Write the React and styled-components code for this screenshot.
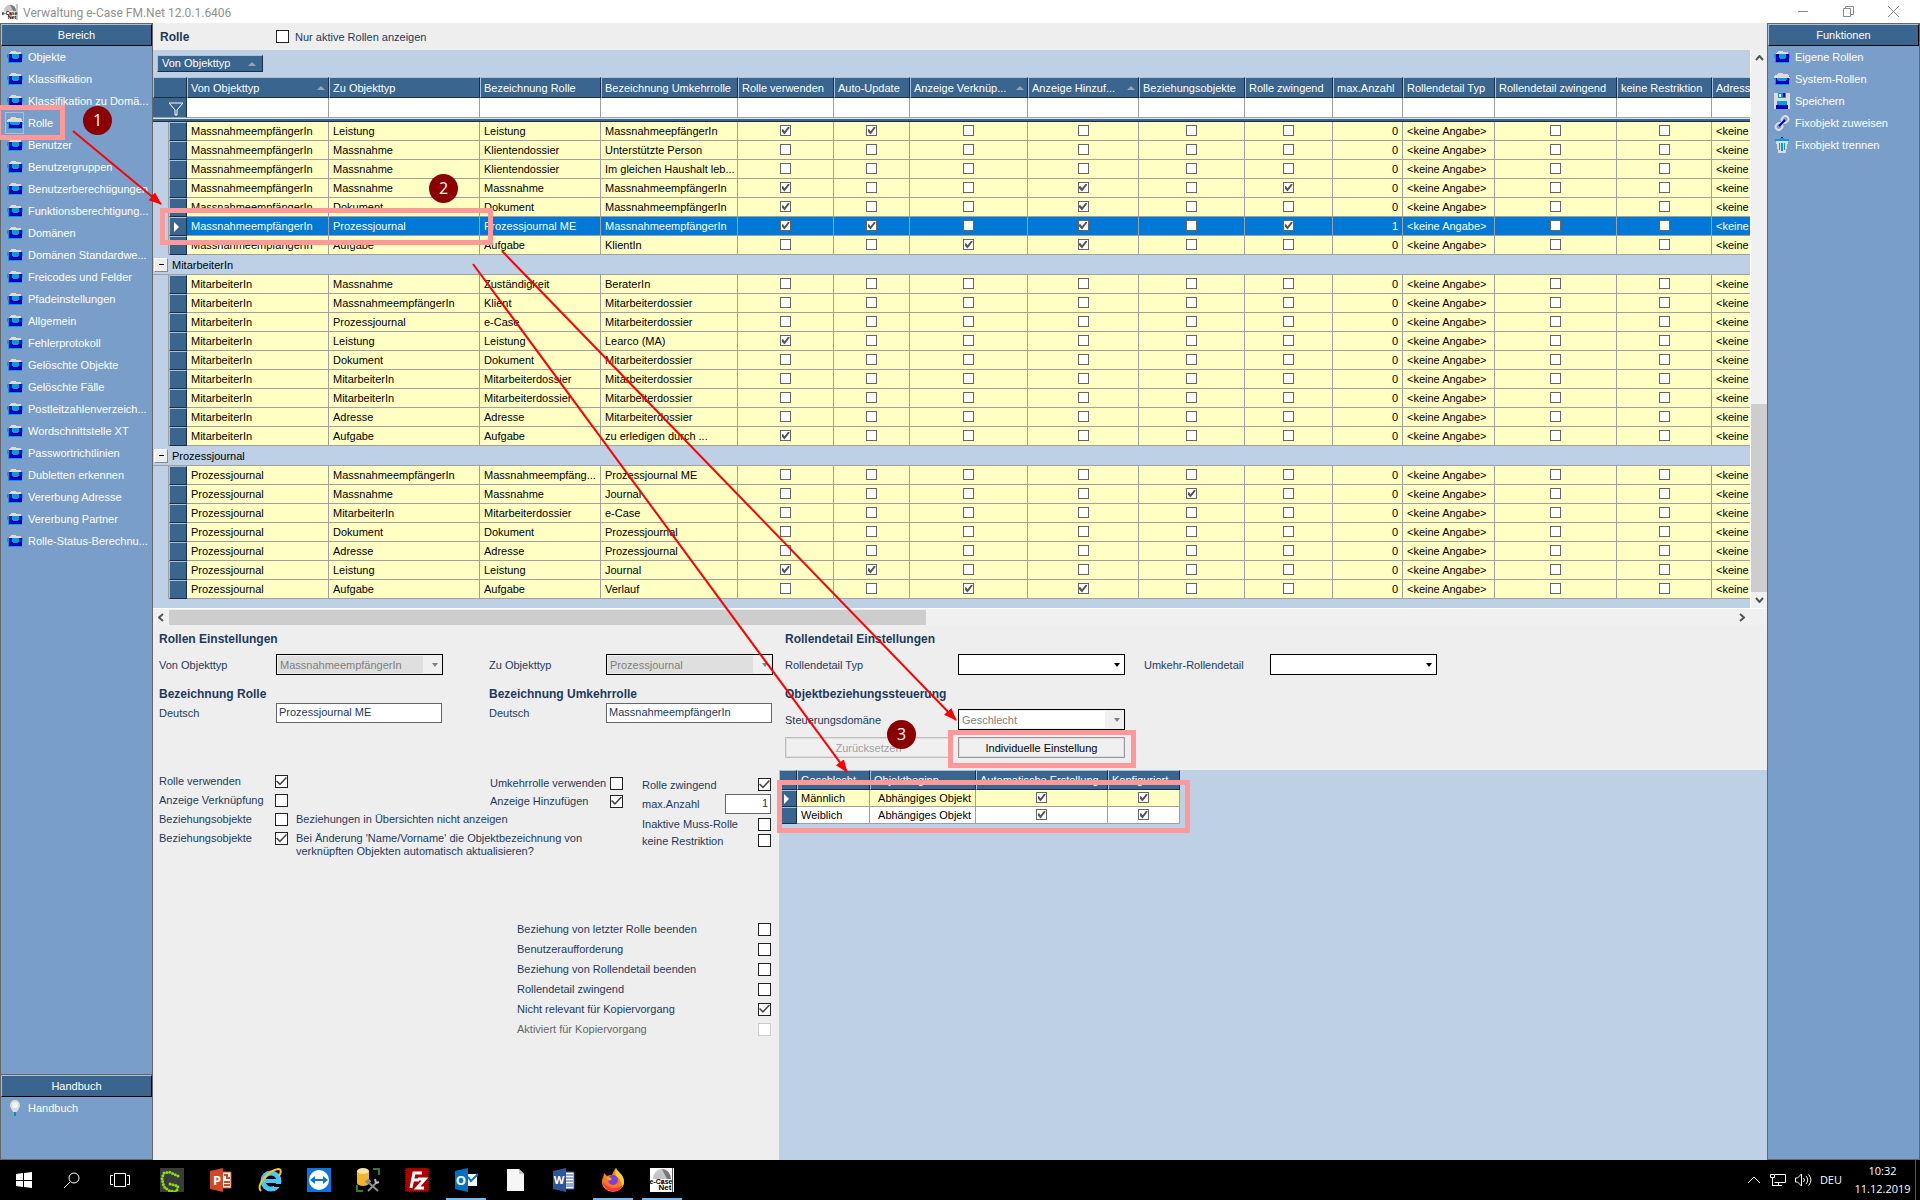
import styled, { createGlobalStyle, css } from "styled-components";

const font = `"Liberation Sans", Arial, sans-serif`;
const uiFont = `"Open Sans", "Noto Sans", sans-serif`;

const colors = {
  header: "#3a658f",
  headerDark: "#1a2f47",
  headerLight: "#a9c1da",
  side: "#799ec9",
  light: "#bdd0e6",
  panel: "#eeeeee",
  yellow: "#ffffc4",
  selected: "#0078d7",
  line: "#a0a0a0",
  navy: "#1d3a5c",
  pink: "#ff9999",
  badge: "#8b0000",
};

const areas = [
  "Objekte", "Klassifikation", "Klassifikation zu Domä...", "Rolle", "Benutzer", "Benutzergruppen",
  "Benutzerberechtigungen", "Funktionsberechtigung...", "Domänen", "Domänen Standardwe...",
  "Freicodes und Felder", "Pfadeinstellungen", "Allgemein", "Fehlerprotokoll", "Gelöschte Objekte",
  "Gelöschte Fälle", "Postleitzahlenverzeich...", "Wordschnittstelle XT", "Passwortrichtlinien",
  "Dubletten erkennen", "Vererbung Adresse", "Vererbung Partner", "Rolle-Status-Berechnu...",
];

const columns = [
  { title: "Von Objekttyp", width: 142, sort: true },
  { title: "Zu Objekttyp", width: 151 },
  { title: "Bezeichnung Rolle", width: 121 },
  { title: "Bezeichnung Umkehrrolle", width: 137 },
  { title: "Rolle verwenden", width: 96 },
  { title: "Auto-Update", width: 76 },
  { title: "Anzeige Verknüp...", width: 118, sort: true },
  { title: "Anzeige Hinzuf...", width: 111, sort: true },
  { title: "Beziehungsobjekte", width: 106 },
  { title: "Rolle zwingend", width: 88 },
  { title: "max.Anzahl", width: 70 },
  { title: "Rollendetail Typ", width: 92 },
  { title: "Rollendetail zwingend", width: 122 },
  { title: "keine Restriktion", width: 95 },
  { title: "Adresstyp", width: 140 },
];

// [zu, rolle, umkehrrolle, flags, max]
const groups = [
  {
    name: "MassnahmeempfängerIn",
    hidden: true,
    rows: [
      ["Leistung", "Leistung", "MassnahmeepfängerIn", "110000"],
      ["Massnahme", "Klientendossier", "Unterstützte Person", "000000"],
      ["Massnahme", "Klientendossier", "Im gleichen Haushalt leb...", "000000"],
      ["Massnahme", "Massnahme", "MassnahmeempfängerIn", "100101"],
      ["Dokument", "Dokument", "MassnahmeempfängerIn", "100100"],
      ["Prozessjournal", "Prozessjournal ME", "MassnahmeempfängerIn", "110101", 1],
      ["Aufgabe", "Aufgabe", "KlientIn", "001100"],
    ],
  },
  {
    name: "MitarbeiterIn",
    rows: [
      ["Massnahme", "Zuständigkeit", "BeraterIn", "000000"],
      ["MassnahmeempfängerIn", "Klient", "Mitarbeiterdossier", "000000"],
      ["Prozessjournal", "e-Case", "Mitarbeiterdossier", "000000"],
      ["Leistung", "Leistung", "Learco (MA)", "100000"],
      ["Dokument", "Dokument", "Mitarbeiterdossier", "000000"],
      ["MitarbeiterIn", "Mitarbeiterdossier", "Mitarbeiterdossier", "000000"],
      ["MitarbeiterIn", "Mitarbeiterdossier", "Mitarbeiterdossier", "000000"],
      ["Adresse", "Adresse", "Mitarbeiterdossier", "000000"],
      ["Aufgabe", "Aufgabe", "zu erledigen durch ...", "100000"],
    ],
  },
  {
    name: "Prozessjournal",
    rows: [
      ["MassnahmeempfängerIn", "Massnahmeempfäng...", "Prozessjournal ME", "000000"],
      ["Massnahme", "Massnahme", "Journal", "000010"],
      ["MitarbeiterIn", "Mitarbeiterdossier", "e-Case", "000000"],
      ["Dokument", "Dokument", "Prozessjournal", "000000"],
      ["Adresse", "Adresse", "Prozessjournal", "000000"],
      ["Leistung", "Leistung", "Journal", "110000"],
      ["Aufgabe", "Aufgabe", "Verlauf", "001100"],
    ],
  },
];

const lowerChecks = [
  { label: "Beziehung von letzter Rolle beenden" },
  { label: "Benutzeraufforderung" },
  { label: "Beziehung von Rollendetail beenden" },
  { label: "Rollendetail zwingend" },
  { label: "Nicht relevant für Kopiervorgang", checked: true },
  { label: "Aktiviert für Kopiervorgang", disabled: true },
];

function FolderIcon({ open }) {
  return (
    <svg width="16" height="16" viewBox="0 0 16 16" shapeRendering="crispEdges">
      <path d="M1 5h15v4h-1v5H1V9H0V5z" fill="#0a9bd6" />
      <path d="M2 5h13v8H2z" fill="#0000c0" />
      <path d="M2 4l2-2h5v1h5v2H2z" fill="#dcdcdc" />
      {open ? (
        <>
          <path d="M1 4h14v2h1v1H0V5h1z" fill="#dcdcdc" />
          <path d="M3 7h10v2h-1v1H4V9H3z" fill="#0a9bd6" />
        </>
      ) : (
        <path d="M5 5h7v4h-1v1H6V9H5z" fill="#0a9bd6" />
      )}
    </svg>
  );
}

function DiskIcon() {
  return (
    <svg width="16" height="16" viewBox="0 0 16 16" shapeRendering="crispEdges">
      <path d="M0 0h16v16H0z" fill="#dcdcdc" />
      <path d="M4 0h8v5H4z" fill="#0a9bd6" />
      <path d="M5 1h2v3H5z" fill="#fff" />
      <path d="M9 0h2v4H9z" fill="#0000c0" />
      <path d="M3 8h10v5H3z" fill="#0a9bd6" />
      <path d="M2 12h12v4H2z" fill="#0000c0" />
    </svg>
  );
}

function LinkIcon() {
  return (
    <svg width="16" height="16" viewBox="0 0 16 16" fill="none">
      <rect x="8" y="1" width="6" height="7" rx="3" transform="rotate(45 11 4.5)" stroke="#dcdcdc" strokeWidth="2" />
      <rect x="2" y="8" width="6" height="7" rx="3" transform="rotate(45 5 11.5)" stroke="#dcdcdc" strokeWidth="2" />
      <path d="M5 11l6-6" stroke="#0000c0" strokeWidth="2" />
    </svg>
  );
}

function TrashIcon() {
  return (
    <svg width="16" height="16" viewBox="0 0 16 16" shapeRendering="crispEdges">
      <path d="M2 4h12v3h-1v5h-1v4H4v-4H3V7H2z" fill="#dcdcdc" />
      <path d="M1 2h5V1h4v1h5v2H1z" fill="#0a9bd6" />
      <path d="M7 0h2v1H7z" fill="#0000c0" />
      <path d="M5 6h1v7H5zM10 6h1v7h-1zM7 6h2v8H7z" fill="#0a9bd6" />
    </svg>
  );
}

function BulbIcon() {
  return (
    <svg width="16" height="16" viewBox="0 0 16 16">
      <path d="M8 0a5 5 0 0 1 5 5c0 3-2 4-3 7H6C5 9 3 8 3 5a5 5 0 0 1 5-5z" fill="#dcdcdc" />
      <circle cx="8" cy="5" r="3" fill="#f4f4f4" />
      <path d="M7 12h2v4H7z" fill="#0a8ac6" />
    </svg>
  );
}

function CaseLogo({ size }) {
  return (
    <svg width={size} height={size} viewBox="0 0 24 24">
      <path d="M0 0h24v24H0z" fill="#fff" />
      <path d="M3 11a9 10 0 0 1 18 0z" fill="#c4c4c4" />
      <path d="M12 1a9 10 0 0 1 9 10h-4z" fill="#777" />
      <path d="M22 0h1v24h-1z" fill="#555" />
      <text x="11" y="16" fontFamily="Liberation Sans" fontSize="7" fontWeight="700" textAnchor="middle">e-Case</text>
      <text x="15" y="22" fontFamily="Liberation Sans" fontSize="8" fontWeight="700" textAnchor="middle">Net</text>
      <path d="M11 12l3 2-2 3z" fill="#c00" />
    </svg>
  );
}

const functions = [
  { label: "Eigene Rollen", icon: <FolderIcon /> },
  { label: "System-Rollen", icon: <FolderIcon open /> },
  { label: "Speichern", icon: <DiskIcon /> },
  { label: "Fixobjekt zuweisen", icon: <LinkIcon /> },
  { label: "Fixobjekt trennen", icon: <TrashIcon /> },
];

const letter = { fontFamily: "Open Sans", fontWeight: 700, fill: "#fff", textAnchor: "middle" };

const taskApps = [
  {
    name: "Greenshot",
    icon: (
      <>
        <path d="M0 0h24v24H0z" fill="#3b3b3b" />
        <path d="M18 8l-4-2-5-2-5 1-2 5 1 6 2 4 5 3 6 1M10 16l4 1 4 1-1 4" fill="none" stroke="#84e010" strokeWidth="3" strokeDasharray="0 3" strokeLinecap="round" />
      </>
    ),
  },
  {
    name: "PowerPoint",
    icon: (
      <>
        <path d="M12 4h10v16H12z" fill="#fff" stroke="#d24726" />
        <path d="M15 7h3v3h3M15 14h6M15 17h6" stroke="#d24726" strokeWidth="2" fill="none" />
        <path d="M1 3l13-3v24L1 21z" fill="#d24726" />
        <text x="8" y="17" fontSize="13" {...letter}>P</text>
      </>
    ),
  },
  {
    name: "Internet Explorer",
    icon: (
      <>
        <circle cx="13" cy="13" r="8" fill="none" stroke="#4dc4f4" strokeWidth="5" />
        <path d="M7 13h15" stroke="#4dc4f4" strokeWidth="4" />
        <path d="M16 16h8v3h-8z" fill="#000" />
        <path d="M3 23C-2 18 9 3 20 1c4 0 3 4 1 7" fill="none" stroke="#f8c51c" strokeWidth="2" />
      </>
    ),
  },
  {
    name: "TeamViewer",
    icon: (
      <>
        <path d="M0 0h24v24H0z" fill="#0e72e0" />
        <circle cx="12" cy="12" r="10" fill="#fff" />
        <path d="M3 12l5-4v3h8V8l5 4-5 4v-3H8v3z" fill="#0e72e0" />
      </>
    ),
  },
  {
    name: "SQL Konfiguration",
    icon: (
      <>
        <path d="M1 3v12a6 3 0 0 0 12 0V3z" fill="#f3b32a" />
        <ellipse cx="7" cy="3" rx="6" ry="3" fill="#fbe3a6" />
        <path d="M17 1h6v6M1 17v6h6" fill="none" stroke="#2f7d3a" strokeWidth="2" />
        <path d="M12 23l8-8M12 14l10 9" stroke="#8d8d8d" strokeWidth="2" />
        <path d="M10 15l4-3" stroke="#8d8d8d" strokeWidth="4" />
        <path d="M19 11l1 4 3-1" stroke="#bbb" strokeWidth="2" fill="none" />
      </>
    ),
  },
  {
    name: "FileZilla",
    icon: (
      <>
        <path d="M0 0h24v24H0z" fill="#b00000" />
        <path d="M0 0h24v24H0z" fill="none" stroke="#400" strokeWidth="2" strokeDasharray="1 1" />
        <path d="M6 20L9 5h8M7 12h7M13 11h7l-8 9h7" fill="none" stroke="#fff" strokeWidth="3" />
      </>
    ),
  },
  {
    name: "Outlook",
    active: true,
    icon: (
      <>
        <path d="M12 6h11v12H12z" fill="#fff" />
        <path d="M14 9l3 4 7-7" fill="none" stroke="#0072c6" strokeWidth="2" />
        <path d="M1 3l13-3v24L1 21z" fill="#0072c6" />
        <text x="7" y="17" fontSize="13" {...letter}>O</text>
      </>
    ),
  },
  {
    name: "Dokument",
    icon: (
      <>
        <path d="M4 1h12l5 5v17H4z" fill="#f6f6f6" />
        <path d="M16 1v5h5z" fill="#c4c4c4" />
      </>
    ),
  },
  {
    name: "Word",
    icon: (
      <>
        <path d="M12 4h10v17H12z" fill="#fff" stroke="#2b579a" />
        <path d="M14 7h7M14 10h7M14 13h7M14 16h7M14 18h7" stroke="#2b579a" />
        <path d="M1 3l13-3v24L1 21z" fill="#2b579a" />
        <text x="7" y="16" fontSize="11" {...letter}>W</text>
      </>
    ),
  },
  {
    name: "Firefox",
    active: true,
    icon: (
      <>
        <path d="M15 0c1 4 8 6 8 14a11 10 0 0 1-22 0c0-4 2-6 2-9l3 3c2-1 3-1 5-1 1-3 2-5 4-7z" fill="#ff7a1a" />
        <path d="M15 0c1 4 8 6 8 14 0 2-1 4-2 5 0-5-3-9-6-11-1-2-1-5 0-8z" fill="#ffcf2e" />
        <path d="M2 13c0 6 5 11 11 10 4 0 8-3 9-6-5 5-17 4-20-4z" fill="#ff3055" />
        <circle cx="12" cy="12" r="5" fill="#7a3fe0" />
        <path d="M5 9c3 0 4 0 6 2l-3 2z" fill="#ffa51f" />
      </>
    ),
  },
  { name: "e-Case", active: true, icon: <CaseLogo size={24} /> },
];

function Check({ checked, ...props }) {
  return <CheckInput type="checkbox" defaultChecked={checked} {...props} />;
}

function SideGroup({ title, children }) {
  return (
    <section>
      <SideHeader>{title}</SideHeader>
      <SideList>{children}</SideList>
    </section>
  );
}

function DropDown({ label, value = "", disabled, fill }) {
  return (
    <SelectBox $disabled={disabled}>
      <Select aria-label={label} disabled={disabled} $fill={fill} defaultValue={value}>
        <option value={value}>{value}</option>
      </Select>
      <Arrow />
    </SelectBox>
  );
}

function RoleRow({ type, row }) {
  const [to, role, reverse, flags, max = 0] = row;
  const selected = max === 1;
  return (
    <Row $selected={selected}>
      <Gutter />
      <Selector>{selected && <Pointer />}</Selector>
      <Cell>{type}</Cell>
      <Cell>{to}</Cell>
      <Cell>{role}</Cell>
      <Cell>{reverse}</Cell>
      {flags.split("").map((flag, i) => (
        <Cell key={i} $align="center">
          <Check aria-label={columns[i + 4].title} checked={flag === "1"} $small />
        </Cell>
      ))}
      <Cell $align="right">{max}</Cell>
      <Cell>&lt;keine Angabe&gt;</Cell>
      <Cell $align="center"><Check aria-label="Rollendetail zwingend" $small /></Cell>
      <Cell $align="center"><Check aria-label="keine Restriktion" $small /></Cell>
      <Cell>&lt;keine Angabe&gt;</Cell>
    </Row>
  );
}

function RoleGrid() {
  return (
    <Grid>
      <colgroup>
        <col style={{ width: 16 }} />
        <col style={{ width: 18 }} />
        {columns.map((c) => <col key={c.title} style={{ width: c.width }} />)}
      </colgroup>
      <thead>
        <tr>
          <Head colSpan={2} />
          {columns.map((c) => (
            <Head key={c.title}>
              <HeadLabel>{c.title}{c.sort && <SortMark />}</HeadLabel>
            </Head>
          ))}
        </tr>
        <tr>
          <FilterHead colSpan={2}>
            <svg width="16" height="14" viewBox="0 0 16 14">
              <path d="M1 1h14L9 8v5H7V8z" fill="none" stroke="#fff" />
            </svg>
          </FilterHead>
          {columns.map((c) => <FilterCell key={c.title} />)}
        </tr>
        <tr><Divider colSpan={17} /></tr>
      </thead>
      <tbody>
        {groups.map((g) => [
          !g.hidden && (
            <tr key={g.name}>
              <GroupCell colSpan={17}>
                <GroupLabel><Collapse aria-label={`${g.name} zuklappen`} />{g.name}</GroupLabel>
              </GroupCell>
            </tr>
          ),
          ...g.rows.map((row, i) => <RoleRow key={g.name + i} type={g.name} row={row} />),
        ])}
      </tbody>
    </Grid>
  );
}

function RoleForm() {
  return (
    <LeftForm>
      <TwoColumns>
        <div>
          <Heading>Rollen Einstellungen</Heading>
          <Field><span>Von Objekttyp</span><DropDown label="Von Objekttyp" value="MassnahmeempfängerIn" disabled fill /></Field>
          <Heading $second>Bezeichnung Rolle</Heading>
          <TextField><span>Deutsch</span><TextInput defaultValue="Prozessjournal ME" /></TextField>
        </div>
        <div>
          <Heading />
          <Field><span>Zu Objekttyp</span><DropDown label="Zu Objekttyp" value="Prozessjournal" disabled fill /></Field>
          <Heading $second>Bezeichnung Umkehrrolle</Heading>
          <TextField><span>Deutsch</span><TextInput defaultValue="MassnahmeempfängerIn" /></TextField>
        </div>
      </TwoColumns>
      <CheckColumns>
        <div>
          <LeadCheck><span>Rolle verwenden</span><Check checked /></LeadCheck>
          <LeadCheck><span>Anzeige Verknüpfung</span><Check /></LeadCheck>
          <LeadCheck><span>Beziehungsobjekte</span><Check /><Hint>Beziehungen in Übersichten nicht anzeigen</Hint></LeadCheck>
          <LeadCheck $tall>
            <span>Beziehungsobjekte</span>
            <Check checked />
            <Hint>Bei Änderung 'Name/Vorname' die Objektbezeichnung von verknüpften Objekten automatisch aktualisieren?</Hint>
          </LeadCheck>
        </div>
        <MiddleChecks>
          <CheckLine $height={18}>Umkehrrolle verwenden<Check /></CheckLine>
          <CheckLine $height={18}>Anzeige Hinzufügen<Check checked /></CheckLine>
        </MiddleChecks>
        <EndChecks>
          <CheckLine $height={19}>Rolle zwingend<Check checked /></CheckLine>
          <CheckLine $height={20}>max.Anzahl<NumberInput defaultValue="1" /></CheckLine>
          <CheckLine $height={20}>Inaktive Muss-Rolle<Check /></CheckLine>
          <CheckLine $height={13}>keine Restriktion<Check /></CheckLine>
        </EndChecks>
      </CheckColumns>
      <LowerChecks>
        {lowerChecks.map((c) => (
          <CheckLine key={c.label} $height={20} $disabled={c.disabled}>
            {c.label}
            <Check checked={c.checked} disabled={c.disabled} />
          </CheckLine>
        ))}
      </LowerChecks>
    </LeftForm>
  );
}

function DetailForm() {
  return (
    <DetailPanel>
      <Heading>Rollendetail Einstellungen</Heading>
      <DetailRow>
        <DetailLabel>Rollendetail Typ</DetailLabel>
        <DropDown label="Rollendetail Typ" />
        <ReverseLabel>Umkehr-Rollendetail</ReverseLabel>
        <DropDown label="Umkehr-Rollendetail" />
      </DetailRow>
      <Heading $second>Objektbeziehungssteuerung</Heading>
      <DetailRow $spaced>
        <DetailLabel>Steuerungsdomäne</DetailLabel>
        <DropDown label="Steuerungsdomäne" value="Geschlecht" disabled />
      </DetailRow>
      <Buttons>
        <Button disabled>Zurücksetzen</Button>
        <Button>Individuelle Einstellung</Button>
      </Buttons>
    </DetailPanel>
  );
}

function GenderGrid() {
  return (
    <SmallGrid>
      <colgroup>
        {[18, 73, 106, 132, 72].map((w, i) => <col key={i} style={{ width: w }} />)}
      </colgroup>
      <thead>
        <tr>
          {["", "Geschlecht", "Objektbeginn", "Automatische Erstellung", "Konfiguriert"].map((t) => <Head key={t} $small>{t}</Head>)}
        </tr>
      </thead>
      <tbody>
        {["Männlich", "Weiblich"].map((t, i) => (
          <SmallRow key={t} $white={i === 1}>
            <Selector>{i === 0 && <Pointer />}</Selector>
            <Cell>{t}</Cell>
            <Cell $align="right">Abhängiges Objekt</Cell>
            <Cell $align="center"><Check aria-label="Automatische Erstellung" checked $small /></Cell>
            <Cell $align="center"><Check aria-label="Konfiguriert" checked $small /></Cell>
          </SmallRow>
        ))}
      </tbody>
    </SmallGrid>
  );
}

function Taskbar() {
  return (
    <TaskbarBox>
      <TaskButton aria-label="Start">
        <svg width="16" height="16" viewBox="0 0 16 16" fill="#fff">
          <path d="M0 2l7-1v7H0zM8 1l8-1v8H8zM0 9h7v6l-7-1zM8 9h8v7l-8-1z" />
        </svg>
      </TaskButton>
      <TaskButton aria-label="Suchen">
        <svg width="18" height="18" viewBox="0 0 18 18" fill="none" stroke="#fff">
          <circle cx="11" cy="7" r="5" />
          <path d="M7 11l-6 6" />
        </svg>
      </TaskButton>
      <TaskButton aria-label="Taskansicht">
        <svg width="20" height="14" viewBox="0 0 20 14" fill="none" stroke="#fff">
          <path d="M4.500.5h11v13h-11zM3 2.500H.5v9H3M17 2.500h2.500v9H17" />
        </svg>
      </TaskButton>
      <Apps>
        {taskApps.map((app) => (
          <AppButton key={app.name} aria-label={app.name} $active={app.active}>
            <svg width="24" height="24" viewBox="0 0 24 24">{app.icon}</svg>
          </AppButton>
        ))}
      </Apps>
      <Tray>
        <svg width="14" height="8" viewBox="0 0 14 8" fill="none" stroke="#fff">
          <path d="M1 7l6-6 6 6" />
        </svg>
        <svg width="18" height="14" viewBox="0 0 18 14" fill="none" stroke="#fff">
          <path d="M5.500 1.500h11v8h-11M1.500 1.500h4v3h-4zM3.500 4.500v8M3 12.500h10M9.500 9.500v3" />
        </svg>
        <svg width="17" height="14" viewBox="0 0 17 14" fill="none" stroke="#fff">
          <path d="M.5 5h2L6.500 1v12l-4-4h-2zM8.500 5q2 2 0 4M11 3q3.500 4 0 8M13.500 1.500q5 5.500 0 11" />
        </svg>
        <span>DEU</span>
        <Clock><span>10:32</span><span>11.12.2019</span></Clock>
      </Tray>
    </TaskbarBox>
  );
}

// red callouts drawn over the window
function Callouts() {
  return (
    <>
      <Frame $x={-4} $y={105} $w={69} $h={35} />
      <Frame $x={160} $y={208} $w={333} $h={37} />
      <Frame $x={948} $y={730} $w={188} $h={38} />
      <Frame $x={777} $y={780} $w={413} $h={53} />
      <Arrows width="1000" height="800" viewBox="0 0 1000 800">
        <defs>
          <marker id="tip" markerUnits="userSpaceOnUse" markerWidth="14" markerHeight="12" refX="12" refY="5" orient="auto">
            <path d="M0 0l13 5-13 5z" fill="#f00" />
          </marker>
        </defs>
        <path d="M73 131L161 204" markerEnd="url(#tip)" />
        <path d="M473 264L847 772" markerEnd="url(#tip)" />
        <path d="M502 251L956 720" markerEnd="url(#tip)" />
      </Arrows>
      <Badge $x={83} $y={106}>1</Badge>
      <Badge $x={429} $y={174}>2</Badge>
      <Badge $x={887} $y={720}>3</Badge>
    </>
  );
}

function App() {
  return (
    <Window>
      <GlobalStyle />
      <TitleBar>
        <CaseLogo size={16} />
        <Title>Verwaltung e-Case FM.Net 12.0.1.6406</Title>
        <WindowButton aria-label="Minimieren"><svg width="11" height="11"><path d="M0 5.500h10" stroke="#888" /></svg></WindowButton>
        <WindowButton aria-label="Wiederherstellen"><svg width="11" height="11"><path d="M.5 2.500h7v8h-7zM2.500 2.500v-2h8v8h-3" stroke="#888" fill="none" /></svg></WindowButton>
        <WindowButton aria-label="Schliessen"><svg width="11" height="11"><path d="M0 0l11 11M11 0L0 11" stroke="#888" /></svg></WindowButton>
      </TitleBar>
      <Main>
        <Side>
          <SideGroup title="Bereich">
            {areas.map((a) => (
              <SideItem key={a} href="#">
                <IconFrame $active={a === "Rolle"}><FolderIcon open={a === "Rolle"} /></IconFrame>
                {a}
              </SideItem>
            ))}
          </SideGroup>
          <Manual>
            <SideGroup title="Handbuch">
              <SideItem href="#"><IconFrame><BulbIcon /></IconFrame>Handbuch</SideItem>
            </SideGroup>
          </Manual>
        </Side>
        <Content>
          <TopBar>
            <PageTitle>Rolle</PageTitle>
            <TopCheck><Check />Nur aktive Rollen anzeigen</TopCheck>
          </TopBar>
          <GridArea>
            <GridView>
              <GroupBar><GroupButton>Von Objekttyp<SortMark /></GroupButton></GroupBar>
              <RoleGrid />
            </GridView>
            <VScroll>
              <ScrollArrow aria-label="Nach oben"><svg width="9" height="6"><path d="M1 5l3.500-4L8 5" stroke="#555" strokeWidth="2" fill="none" /></svg></ScrollArrow>
              <VThumb />
              <ScrollArrow aria-label="Nach unten"><svg width="9" height="6"><path d="M1 1l3.500 4L8 1" stroke="#555" strokeWidth="2" fill="none" /></svg></ScrollArrow>
            </VScroll>
          </GridArea>
          <HScroll>
            <ScrollArrow aria-label="Nach links"><svg width="6" height="9"><path d="M5 1L1 4.500 5 8" stroke="#555" strokeWidth="2" fill="none" /></svg></ScrollArrow>
            <HTrack><HThumb /></HTrack>
            <ScrollArrow aria-label="Nach rechts"><svg width="6" height="9"><path d="M1 1l4 3.500L1 8" stroke="#555" strokeWidth="2" fill="none" /></svg></ScrollArrow>
          </HScroll>
          <Forms>
            <RoleForm />
            <RightForms>
              <DetailForm />
              <GenderGrid />
            </RightForms>
          </Forms>
        </Content>
        <Side>
          <SideGroup title="Funktionen">
            {functions.map((f) => (
              <SideItem key={f.label} href="#"><IconFrame>{f.icon}</IconFrame>{f.label}</SideItem>
            ))}
          </SideGroup>
        </Side>
      </Main>
      <Taskbar />
      <Callouts />
    </Window>
  );
}

const GlobalStyle = createGlobalStyle`
  * {
    box-sizing: border-box;
  }
  body {
    margin: 0;
  }
  button, input, select {
    font: inherit;
    color: inherit;
    margin: 0;
    padding: 0;
    border-radius: 0;
  }
`
const Window = styled.div`
  position: relative;
  min-height: 100vh;
  overflow: hidden;
  display: flex;
  flex-direction: column;
  background-color: ${colors.panel};
  font-family: ${font};
  font-size: 11px;
  line-height: 16px;
  color: #000;
`
const TitleBar = styled.header`
  height: 23px;
  display: flex;
  align-items: center;
  padding: 0 4px 0 2px;
  background-color: #fff;
`
const Title = styled.span`
  flex: 1;
  padding: 2px 0 0 5px;
  font-family: Roboto, sans-serif;
  font-size: 12px;
  color: #909090;
`
const WindowButton = styled.button`
  width: 45px;
  height: 20px;
  border: 0;
  background: none;
  display: flex;
  align-items: center;
  justify-content: center;
`
const Main = styled.main`
  flex: 1;
  display: flex;
`
const Side = styled.nav`
  width: 153px;
  flex: none;
  display: flex;
  flex-direction: column;
  background-color: ${colors.side};
  border: 1px solid #666;
`
const Manual = styled.div`
  margin-top: auto;
  height: 85px;
  border-top: 1px solid #666;
`
const SideHeader = styled.h2`
  margin: 0;
  height: 22px;
  line-height: 20px;
  text-align: center;
  font-size: 11px;
  font-weight: 400;
  color: #fff;
  background-color: ${colors.header};
  border: 1px solid #000;
  border-top-color: ${colors.headerLight};
  border-left-color: ${colors.headerLight};
`
const SideList = styled.div`
  display: flex;
  flex-direction: column;
`
const SideItem = styled.a`
  height: 22px;
  padding-left: 4px;
  display: flex;
  align-items: center;
  gap: 4px;
  color: #fff;
  text-decoration: none;
  white-space: nowrap;
`
const IconFrame = styled.span`
  width: 19px;
  height: 22px;
  flex: none;
  display: flex;
  align-items: center;
  justify-content: center;
  border: 1px solid ${(p) => (p.$active ? "#a9c1da" : "transparent")};
`
const Content = styled.div`
  flex: 1;
  min-width: 0;
  display: flex;
  flex-direction: column;
`
const TopBar = styled.div`
  height: 27px;
  padding-left: 7px;
  display: flex;
  align-items: center;
  color: ${colors.navy};
`
const PageTitle = styled.h1`
  margin: 0;
  width: 116px;
  font-size: 12px;
`
const TopCheck = styled.label`
  display: flex;
  align-items: center;
  gap: 6px;
`
const CheckInput = styled.input`
  appearance: none;
  flex: none;
  width: 13px;
  height: 13px;
  border: 1px solid #222;
  background-color: #fff;
  display: inline-grid;
  place-content: center;
  vertical-align: top;
  &:checked::before {
    content: "";
    width: 11px;
    height: 9px;
    background-color: #444;
    clip-path: polygon(0 50%, 10% 40%, 36% 70%, 90% 0, 100% 10%, 36% 95%);
  }
  &:disabled {
    border-color: #ccc;
  }
  ${(p) => p.$small && css`
    width: 11px;
    height: 11px;
    margin-top: 3px;
    border-color: #666;
    &:checked::before {
      width: 8px;
      height: 8px;
      background-color: #555;
      clip-path: polygon(0 35%, 20% 35%, 38% 60%, 85% 0, 100% 0, 100% 18%, 38% 100%, 0 60%);
    }
  `}
`
const GridArea = styled.div`
  display: flex;
  background-color: ${colors.light};
`
const GridView = styled.div`
  flex: 1;
  min-width: 0;
  height: 558px;
  overflow: hidden;
`
const GroupBar = styled.div`
  height: 27px;
  padding: 5px 4px;
`
const GroupButton = styled.button`
  width: 106px;
  height: 17px;
  padding: 0 6px 0 4px;
  display: flex;
  align-items: center;
  justify-content: space-between;
  line-height: 15px;
  color: #fff;
  background-color: ${colors.header};
  border: 1px solid ${colors.headerDark};
  border-top-color: ${colors.headerLight};
  border-left-color: ${colors.headerLight};
`
const SortMark = styled.i`
  flex: none;
  border: 4px solid transparent;
  border-top: 0;
  border-bottom-color: #9aa5ae;
`
const Grid = styled.table`
  width: 1699px;
  table-layout: fixed;
  border-collapse: separate;
  border-spacing: 0;
`
const Head = styled.th`
  height: ${(p) => (p.$small ? 20 : 21)}px;
  padding: 0 3px;
  overflow: hidden;
  white-space: nowrap;
  text-align: left;
  font-weight: 400;
  line-height: 18px;
  color: #fff;
  background-color: ${colors.header};
  border: 1px solid ${colors.headerDark};
  border-top-color: ${colors.headerLight};
  border-left-color: ${colors.headerLight};
`
const HeadLabel = styled.div`
  display: flex;
  align-items: center;
  justify-content: space-between;
`
const FilterHead = styled.td`
  height: 20px;
  padding: 2px 2px 0 0;
  line-height: 0;
  text-align: right;
  background-color: ${colors.header};
  border-right: 1px solid ${colors.headerDark};
  border-bottom: 1px solid ${colors.line};
`
const FilterCell = styled.td`
  padding: 0;
  background-color: #fff;
  border-right: 1px solid ${colors.line};
  border-bottom: 1px solid ${colors.line};
`
const Divider = styled.td`
  height: 4px;
  padding: 0;
  background-color: ${colors.header};
  border-top: 1px solid #dde6ef;
  border-bottom: 1px solid ${colors.headerDark};
`
const Row = styled.tr`
  height: 19px;
  color: ${(p) => (p.$selected ? "#fff" : "#000")};
  background-color: ${(p) => (p.$selected ? colors.selected : colors.yellow)};
`
const Cell = styled.td`
  padding: 0 ${(p) => (p.$align ? 4 : 0)}px 0 4px;
  line-height: 18px;
  overflow: hidden;
  white-space: nowrap;
  vertical-align: top;
  text-align: ${(p) => p.$align || "left"};
  border-right: 1px solid ${colors.line};
  border-bottom: 1px solid ${colors.line};
`
const Gutter = styled.td`
  padding: 0;
  background-color: ${colors.light};
  border-right: 1px solid ${colors.line};
`
const Selector = styled.td`
  padding: 0 0 0 4px;
  line-height: 0;
  background-color: ${colors.header};
  border: 1px solid ${colors.headerDark};
  border-top-color: ${colors.headerLight};
  border-left-color: ${colors.headerLight};
`
const Pointer = styled.i`
  display: inline-block;
  border: 5px solid transparent;
  border-right: 0;
  border-left-color: #fff;
`
const GroupCell = styled.td`
  height: 20px;
  padding: 0 1px;
  background-color: ${colors.light};
  border-bottom: 1px solid ${colors.line};
`
const GroupLabel = styled.div`
  display: flex;
  align-items: center;
  gap: 4px;
`
const Collapse = styled.button`
  width: 14px;
  height: 14px;
  display: grid;
  place-content: center;
  background-color: ${colors.panel};
  border: 1px solid #888;
  border-top-color: #fff;
  border-left-color: #fff;
  &::before {
    content: "";
    width: 5px;
    height: 1px;
    background-color: #000;
  }
`
const VScroll = styled.div`
  width: 17px;
  display: flex;
  flex-direction: column;
  background-color: #f0f0f0;
  border-left: 1px solid #fff;
`
const ScrollArrow = styled.button`
  width: 16px;
  height: 16px;
  flex: none;
  display: grid;
  place-content: center;
  border: 0;
  background: none;
`
const VThumb = styled.div`
  margin-top: auto;
  height: 188px;
  background-color: #cdcdcd;
`
const HScroll = styled.div`
  height: 17px;
  display: flex;
  align-items: center;
  padding-right: 17px;
  background-color: #f0f0f0;
  border-top: 1px solid #fff;
`
const HTrack = styled.div`
  flex: 1;
  display: flex;
`
const HThumb = styled.div`
  width: 48.4%;
  height: 15px;
  background-color: #cdcdcd;
`
const Forms = styled.div`
  flex: 1;
  display: flex;
  color: ${colors.navy};
`
const LeftForm = styled.form`
  width: 626px;
  flex: none;
  padding: 5px 6px;
`
const TwoColumns = styled.div`
  display: grid;
  grid-template-columns: 330px 1fr;
`
const Heading = styled.h3`
  margin: ${(p) => (p.$second ? "10px 0 0" : "0 0 6px")};
  height: 18px;
  line-height: 18px;
  font-size: 12px;
`
const Field = styled.label`
  display: grid;
  grid-template-columns: 117px 167px;
  align-items: center;
`
const TextField = styled(Field)`
  grid-template-columns: 117px 166px;
`
const SelectBox = styled.div`
  width: 167px;
  height: 21px;
  display: flex;
  align-items: center;
  padding-right: 4px;
  border: 1px solid #000;
  color: ${(p) => (p.$disabled ? "#808080" : "#000")};
  background-color: ${(p) => (p.$disabled ? "#f0f0f0" : "#fff")};
`
const Select = styled.select`
  appearance: none;
  flex: 1;
  min-width: 0;
  height: 17px;
  margin: 0 9px 0 1px;
  padding-left: 2px;
  border: 0;
  opacity: 1;
  background-color: ${(p) => (p.$fill ? "#dfdfdf" : "#fff")};
`
const Arrow = styled.i`
  border: 3px solid transparent;
  border-bottom: 0;
  border-top: 4px solid currentColor;
`
const TextInput = styled.input`
  width: 100%;
  height: 20px;
  padding: 0 2px 2px;
  border: 1px solid #666;
  background-color: #fff;
`
const CheckColumns = styled.div`
  margin-top: 49px;
  display: grid;
  grid-template-columns: 331px 152px 129px;
`
const LeadCheck = styled.label`
  height: ${(p) => (p.$tall ? 29 : 19)}px;
  padding-top: ${(p) => (p.$tall ? 3 : 0)}px;
  line-height: 13px;
  display: grid;
  grid-template-columns: 116px 13px 310px;
  align-items: ${(p) => (p.$tall ? "start" : "center")};
`
const Hint = styled.span`
  padding-left: 8px;
`
const MiddleChecks = styled.div`
  padding: 2px 19px 0 0;
`
const EndChecks = styled.div`
  padding-top: 3px;
`
const CheckLine = styled.label`
  height: ${(p) => p.$height}px;
  display: flex;
  align-items: center;
  justify-content: space-between;
  white-space: nowrap;
  color: ${(p) => (p.$disabled ? "#666" : "inherit")};
`
const NumberInput = styled(TextInput)`
  width: 46px;
  text-align: right;
`
const LowerChecks = styled.div`
  width: 254px;
  margin: 61px 0 0 358px;
`
const RightForms = styled.div`
  flex: 1;
  min-width: 0;
  background-color: ${colors.light};
`
const DetailPanel = styled.form`
  height: 145px;
  padding: 5px 6px;
  background-color: ${colors.panel};
`
const DetailRow = styled.div`
  display: flex;
  align-items: center;
  margin-top: ${(p) => (p.$spaced ? 6 : 0)}px;
`
const DetailLabel = styled.span`
  width: 173px;
`
const ReverseLabel = styled.span`
  width: 145px;
  padding-left: 19px;
`
const Buttons = styled.div`
  margin-top: 7px;
  display: flex;
  gap: 6px;
`
const Button = styled.button`
  width: 167px;
  height: 21px;
  color: #000;
  background-color: #f0f0f0;
  border: 1px solid #999;
  box-shadow: inset 0 0 0 1px #ddd;
  &:disabled {
    color: #a0a0a0;
    border-color: #bfbfbf;
  }
`
const SmallGrid = styled.table`
  width: 401px;
  table-layout: fixed;
  border-collapse: separate;
  border-spacing: 0;
  color: #000;
`
const SmallRow = styled.tr`
  height: 17px;
  background-color: ${(p) => (p.$white ? "#fff" : colors.yellow)};
  ${Cell} {
    line-height: 16px;
  }
  ${CheckInput} {
    margin-top: 2px;
  }
`
const TaskbarBox = styled.footer`
  height: 40px;
  display: flex;
  background-color: #000;
  color: #fff;
  font-family: ${uiFont};
  font-size: 11px;
`
const TaskButton = styled.button`
  width: 48px;
  display: grid;
  place-content: center;
  border: 0;
  background: none;
`
const Apps = styled.div`
  display: flex;
  padding-left: 3px;
`
const AppButton = styled(TaskButton)`
  width: 49px;
  background: ${(p) => (p.$active ? "linear-gradient(#76b9ed, #76b9ed) bottom / 40px 2px no-repeat" : "none")};
`
const Tray = styled.div`
  margin-left: auto;
  padding-right: 4px;
  display: flex;
  align-items: center;
  gap: 8px;
`
const Clock = styled.time`
  width: 66px;
  height: 40px;
  display: flex;
  flex-direction: column;
  align-items: center;
  justify-content: center;
  line-height: 18px;
  border-right: 1px solid #555;
`
const Frame = styled.div`
  position: absolute;
  left: ${(p) => p.$x}px;
  top: ${(p) => p.$y}px;
  width: ${(p) => p.$w}px;
  height: ${(p) => p.$h}px;
  border: 5px solid ${colors.pink};
  pointer-events: none;
`
const Arrows = styled.svg`
  position: absolute;
  left: 0;
  top: 0;
  fill: none;
  stroke: #f00;
  stroke-width: 2;
  pointer-events: none;
  marker path {
    stroke: none;
  }
`
const Badge = styled.span`
  position: absolute;
  left: ${(p) => p.$x}px;
  top: ${(p) => p.$y}px;
  width: 29px;
  height: 29px;
  border-radius: 50%;
  line-height: 29px;
  text-align: center;
  font-family: ${uiFont};
  font-size: 16px;
  color: #fff;
  background-color: ${colors.badge};
`

export default App;
